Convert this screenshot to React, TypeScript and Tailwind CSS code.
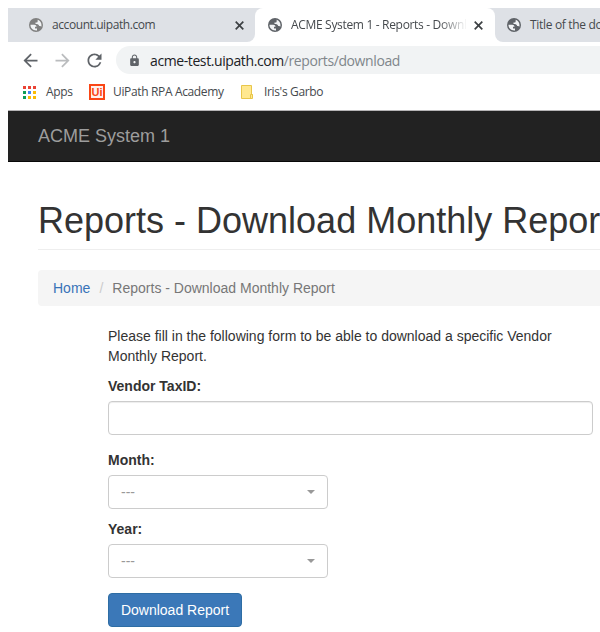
import React from "react";
import { MdArrowBack, MdArrowForward, MdRefresh, MdLock } from "react-icons/md";

const appDots = [
  "bg-[#ea4335]", "bg-[#ea4335]", "bg-[#ea4335]",
  "bg-[#0f9d58]", "bg-[#4285f4]", "bg-[#fbbc05]",
  "bg-[#0f9d58]", "bg-[#fbbc05]", "bg-[#fbbc05]",
];

function Globe({ className }: { className: string }) {
  return (
    <svg viewBox="0 0 14 14" className={`size-[14px] shrink-0 ${className}`}>
      <circle cx="7" cy="7" r="7" fill="currentColor" />
      <path
        className="fill-[#f1f3f5]"
        d="M1.5 6.8h3.7c1.5 0 2.3.7 2.3 2H6v1.7h2v1.9C4.5 12.8 1.3 10.4 1.5 6.8zM8.6 1.8c2.3.6 3.9 2.7 3.9 5.2 0 .7-.1 1.2-.3 1.7-.5-.5-1.1-.6-2-.6-.5-1.6-1.3-2-3.7-2V4.5h1.7c.6-.8.6-1.7.4-2.7z"
      />
    </svg>
  );
}

function Close({ className }: { className: string }) {
  return (
    <svg viewBox="0 0 9 9" className={`size-[9px] shrink-0 ${className}`}>
      <path d="M.7 .7l7.6 7.6M8.3 .7L.7 8.3" stroke="#3c4043" strokeWidth="1.7" />
    </svg>
  );
}

function TabStrip() {
  return (
    <div className="flex h-[34px] bg-white text-[12px] text-[#45494d]">
      <div className="flex w-[247px] shrink-0 items-center rounded-br-lg bg-[#dee1e6] pl-[21px]">
        <Globe className="text-[#808080]" />
        <span className="ml-[9px] w-[183px] whitespace-nowrap tracking-[-0.42px]">account.uipath.com</span>
        <Close className="" />
      </div>
      <div className="h-full w-[240px] shrink-0 bg-[#dee1e6]">
        <div className="flex h-full items-center rounded-t-lg bg-white pl-[13px]">
          <Globe className="text-[#5f6368]" />
          <span className="ml-[9px] w-[176px] shrink-0 overflow-hidden whitespace-nowrap tracking-[-0.32px] [mask-image:linear-gradient(to_right,black_84%,transparent)]">
            ACME System 1 - Reports - Download
          </span>
          <Close className="ml-[7px]" />
        </div>
      </div>
      <div className="flex min-w-0 flex-1 items-center overflow-hidden rounded-bl-lg bg-[#dee1e6] pl-3">
        <Globe className="text-[#5f6368]" />
        <span className="ml-[9px] whitespace-nowrap tracking-[-0.32px]">Title of the document</span>
      </div>
    </div>
  );
}

function Toolbar() {
  return (
    <div className="flex h-9 items-center pl-3 text-[#5f6368]">
      <MdArrowBack className="size-[21px]" />
      <MdArrowForward className="ml-[11px] size-[21px] text-[#babcbe]" />
      <MdRefresh className="ml-[11px] size-[21px]" />
      <div className="ml-[11px] flex h-7 flex-1 items-center rounded-l-full bg-[#f1f3f4] pl-3">
        <MdLock className="size-[13px]" />
        <span className="ml-[9px] whitespace-nowrap text-[14px] tracking-[-0.4px] text-[#202124]">
          acme-test.uipath.com<span className="text-[#80868b]">/reports/download</span>
        </span>
      </div>
    </div>
  );
}

function Bookmarks() {
  return (
    <div className="flex h-7 items-center whitespace-nowrap pl-[15px] text-[12px] text-[#45494d]">
      <div className="grid grid-cols-3 gap-[2px]">
        {appDots.map((c, i) => (
          <i key={i} className={`block size-[3px] ${c}`} />
        ))}
      </div>
      <span className="ml-[10px] w-[43px] tracking-[-0.3px]">Apps</span>
      <div className="flex size-4 items-center justify-center border-2 border-[#fa4616] bg-[#fff1ec] font-['Liberation_Sans',sans-serif] text-[11px] font-bold leading-none text-[#fa4616]">
        Ui
      </div>
      <span className="ml-2 w-[128px] tracking-[-0.35px]">UiPath RPA Academy</span>
      <svg className="h-[14px] w-3" viewBox="0 0 12 14">
        <path d="M.5.5h10v9h1v4H.5z" fill="#ffe88f" stroke="#e8c64a" />
        <path d="M9.5 13V9.5h2" fill="none" stroke="#e8c64a" />
      </svg>
      <span className="ml-[11px] tracking-[-0.35px]">Iris's Garbo</span>
    </div>
  );
}

function SelectBox({ label }: { label: string }) {
  return (
    <div className="mb-[10px]">
      <div className="mb-[5px] font-bold">{label}</div>
      <div className="flex h-[34px] w-[220px] items-center justify-between rounded border border-[#ccc] pl-3 pr-3 text-[#999]">
        <span>---</span>
        <i className="block border-x-4 border-t-4 border-x-transparent border-t-[#999]" />
      </div>
    </div>
  );
}

export default function App() {
  return (
    <div className="h-[632px] w-[600px] overflow-hidden bg-white pl-2 pt-2">
      <div className="h-[102px] font-['Open_Sans',sans-serif]">
        <TabStrip />
        <Toolbar />
        <Bookmarks />
      </div>
      <div className="font-['Liberation_Sans',Arial,sans-serif] text-[14px] leading-5 text-[#333]">
        <nav className="flex h-[52px] items-center border-b border-t border-b-[#080808] border-t-[#b6b4b6] bg-[#222] pl-[30px] text-[18px] text-[#9d9d9d]">
          ACME System 1
        </nav>
        <main className="pl-[30px]">
          <h1 className="mt-10 h-12 whitespace-nowrap border-b border-[#eee] text-[36px] leading-[38px]">
            Reports - Download Monthly Report
          </h1>
          <div className="mt-5 flex h-9 items-center rounded-l bg-[#f5f5f5] pl-[15px] text-[#777]">
            <span className="text-[#3873b8]">Home</span>
            <span className="w-[22px] text-center text-[#ccc]">/</span>
            <span>Reports - Download Monthly Report</span>
          </div>
          <form className="ml-[70px] mt-5 w-[485px]">
            <p className="mb-[10px]">
              Please fill in the following form to be able to download a specific Vendor Monthly Report.
            </p>
            <label className="mb-[5px] block font-bold">Vendor TaxID:</label>
            <input className="mb-[15px] block h-[34px] w-full rounded border border-[#ccc] shadow-[inset_0_1px_1px_rgba(0,0,0,0.075)]" />
            <SelectBox label="Month:" />
            <SelectBox label="Year:" />
            <button type="button" className="mt-[15px] block h-[34px] w-[134px] rounded border border-[#2e6da4] bg-[#3b78b8] text-white">
              Download Report
            </button>
          </form>
        </main>
      </div>
    </div>
  );
}
